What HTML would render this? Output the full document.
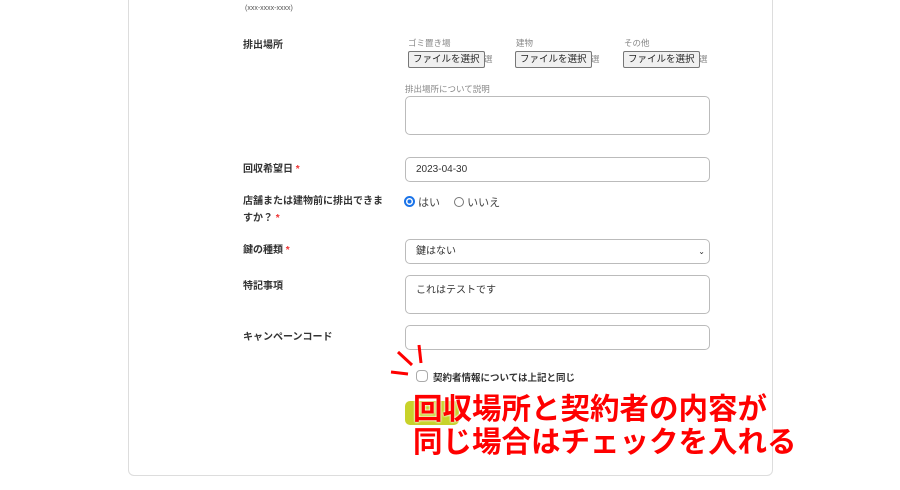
<!DOCTYPE html>
<html><head><meta charset="utf-8"><style>
body{margin:0;width:900px;height:490px;background:#fff;position:relative;overflow:hidden;font-family:"Liberation Sans","Noto Sans CJK JP",sans-serif;color:#222}
.card{position:absolute;left:128px;top:-10px;width:643px;height:484px;border:1px solid #ddd;border-radius:6px;background:#fff}
.a{position:absolute;white-space:nowrap}
.lbl{font-size:10px;font-weight:bold;color:#333}
.req{color:#e33}
.inp{position:absolute;left:405px;width:305px;border:1px solid #bbb;border-radius:5px;background:#fff;font-size:10px;color:#333;box-sizing:border-box;padding-left:10px}
.fb{position:absolute;font-size:9.5px;border:1px solid #777;border-radius:2px;background:#f0f0f0;padding:1px 4px;height:17px;box-sizing:border-box;line-height:14px}
.sm{font-size:8.5px;color:#888}
.big{position:absolute;left:413px;font-size:29.5px;font-weight:bold;color:#f00;white-space:nowrap;text-shadow:0 0 2px #fff,0 0 2px #fff;letter-spacing:0}
</style></head><body>
<div class="card"></div>
<div class="a" style="left:245px;top:5px;font-size:7px;color:#555">(xxx-xxxx-xxxx)</div>
<div class="a lbl" style="left:243px;top:36px">排出場所</div>
<div class="a sm" style="left:408px;top:37px">ゴミ置き場</div>
<div class="a sm" style="left:516px;top:37px">建物</div>
<div class="a sm" style="left:624px;top:37px">その他</div>
<div class="fb" style="left:408px;top:51px">ファイルを選択</div><div class="a sm" style="left:484px;top:53px">選</div>
<div class="fb" style="left:515px;top:51px">ファイルを選択</div><div class="a sm" style="left:591px;top:53px">選</div>
<div class="fb" style="left:623px;top:51px">ファイルを選択</div><div class="a sm" style="left:699px;top:53px">選</div>
<div class="a sm" style="left:405px;top:83px">排出場所について説明</div>
<div class="inp" style="top:96px;height:39px"></div>
<div class="a lbl" style="left:243px;top:160px">回収希望日 <span class="req">*</span></div>
<div class="inp" style="top:157px;height:25px;line-height:23px">2023-04-30</div>
<div class="a lbl" style="left:243px;top:193px;line-height:17px">店舗または建物前に排出できま<br>すか？ <span class="req">*</span></div>
<div class="a" style="left:404px;top:194px;font-size:11px;color:#444"><span style="display:inline-block;width:7px;height:7px;border:2px solid #1a73e8;border-radius:50%;vertical-align:-1px;box-sizing:content-box;background:radial-gradient(#1a73e8 40%,#fff 45%)"></span> はい　 <span style="display:inline-block;width:8px;height:8px;border:1px solid #777;border-radius:50%;vertical-align:-1px"></span> いいえ</div>
<div class="a lbl" style="left:243px;top:241px">鍵の種類 <span class="req">*</span></div>
<div class="inp" style="top:239px;height:25px;line-height:23px">鍵はない<span style="position:absolute;right:4px;font-size:8px">⌄</span></div>
<div class="a lbl" style="left:243px;top:277px">特記事項</div>
<div class="inp" style="top:275px;height:39px;padding-top:5px">これはテストです</div>
<div class="a lbl" style="left:243px;top:328px">キャンペーンコード</div>
<div class="inp" style="top:325px;height:25px"></div>
<div class="a" style="left:416px;top:370px;width:10px;height:10px;border:1px solid #aaa;border-radius:4px"></div>
<div class="a lbl" style="left:433px;top:370px;font-size:9.5px">契約者情報については上記と同じ</div>
<div class="a" style="left:405px;top:401px;width:54px;height:24px;background:#c8d22a;border-radius:5px"></div>
<svg class="a" style="left:385px;top:340px" width="40" height="40"><g stroke="#f00" stroke-width="3"><line x1="13" y1="12" x2="27" y2="25"/><line x1="34" y1="5" x2="36" y2="23"/><line x1="6" y1="32" x2="23" y2="34"/></g></svg>
<div class="big" style="top:386px">回収場所と契約者の内容が</div>
<div class="big" style="top:419px">同じ場合はチェックを入れる</div>
</body></html>
